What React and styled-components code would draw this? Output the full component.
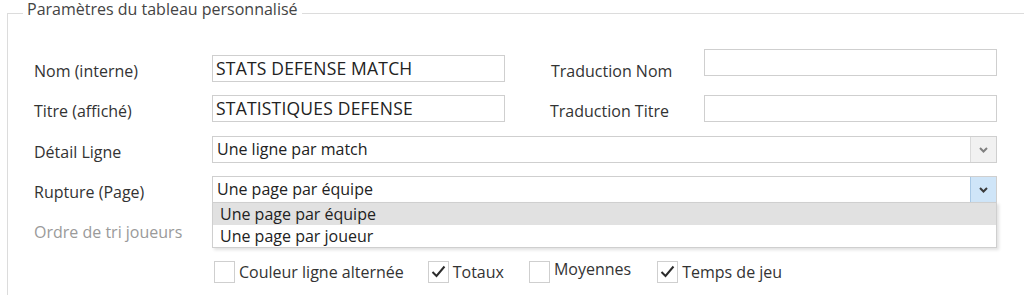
import { createGlobalStyle, styled } from "styled-components";

const GlobalStyle = createGlobalStyle`
  html, body {
    margin: 0;
    padding: 0;
    background: #ffffff;
    overflow: hidden;
  }
  body {
    font-family: "Open Sans", "Noto Sans", Arial, sans-serif;
    font-size: 16px;
    color: #333333;
  }
`;

const Page = styled.div`
  width: 1024px;
  height: 295px;
  overflow: hidden;
`;

const Fieldset = styled.fieldset`
  margin: 0 0 0 7px;
  width: 1060px;
  padding: 29px 0 20px 26px;
  border: 1px solid #dcdcdc;
  min-inline-size: 0;
`;

const Legend = styled.legend`
  margin-left: -11px;
  padding: 0 4px 8px 4px;
  line-height: 18px;
  font-size: 16px;
  color: #444444;
`;

const Row = styled.div`
  display: flex;
  align-items: center;
  height: 27px;
  margin-bottom: ${(p) => p.$gap ?? 13}px;
`;

const Label = styled.div`
  width: ${(p) => p.$width ?? 178}px;
  margin-left: ${(p) => p.$indent ?? 0}px;
  padding-top: 5px;
  color: ${(p) => (p.$disabled ? "#9a9a9a" : "#333333")};
  white-space: nowrap;
`;

const TextBox = styled.div`
  box-sizing: border-box;
  width: 293px;
  height: 27px;
  margin-bottom: ${(p) => p.$lift ?? 0}px;
  border: 1px solid #cfcfcf;
  padding: 0 3px;
  font-size: 17.5px;
  line-height: 25px;
  letter-spacing: 0.2px;
  color: #222222;
  white-space: nowrap;
  overflow: hidden;
`;

const SelectWrap = styled.div`
  position: relative;
  width: 785px;
  height: 27px;
`;

const SelectBox = styled.div`
  box-sizing: border-box;
  display: flex;
  width: 100%;
  height: 100%;
  border: 1px solid #cfcfcf;
  background: #ffffff;
`;

const SelectValue = styled.div`
  flex: 1;
  padding: 0 4px;
  line-height: 25px;
  color: #222222;
  white-space: nowrap;
`;

const SelectButton = styled.div`
  width: 25px;
  display: flex;
  align-items: center;
  justify-content: center;
  border-left: 1px solid ${(p) => (p.$open ? "#a9c9e6" : "#dadada")};
  background: ${(p) => (p.$open ? "#cfe5f8" : "#f1f1f1")};
  color: ${(p) => (p.$open ? "#3b3b3b" : "#808080")};
`;

const DropList = styled.div`
  position: absolute;
  top: 26px;
  left: 0;
  right: 0;
  z-index: 2;
  box-sizing: border-box;
  border: 1px solid #cfcfcf;
  background: #ffffff;
  box-shadow: 2px 2px 3px rgba(0, 0, 0, 0.12);
`;

const DropItem = styled.div`
  height: 22px;
  line-height: 22px;
  padding: 0 7px;
  color: #222222;
  background: ${(p) => (p.$active ? "#e1e1e1" : "#ffffff")};
`;

const Checks = styled.div`
  display: flex;
  align-items: center;
  margin-left: 180px;
  height: 23px;
`;

const CheckItem = styled.label`
  display: flex;
  align-items: center;
  gap: 4px;
  margin-right: ${(p) => p.$space}px;
  color: #333333;
  white-space: nowrap;
`;

const CheckText = styled.span`
  padding-bottom: ${(p) => (p.$raised ? 6 : 0)}px;
`;

const Box = styled.span`
  box-sizing: border-box;
  width: 21px;
  height: 22px;
  border: 1px solid #cfcfcf;
  background: #ffffff;
  display: flex;
  align-items: center;
  justify-content: center;
`;

function Chevron() {
  return (
    <svg width="9" height="6" viewBox="0 0 9 6">
      <path d="M1 1 L4.5 4.5 L8 1" fill="none" stroke="currentColor" strokeWidth="2" />
    </svg>
  );
}

function Tick() {
  return (
    <svg width="15" height="13" viewBox="0 0 15 13">
      <path d="M1.5 7 L5.5 11 L13.5 1.5" fill="none" stroke="#2b2b2b" strokeWidth="2" />
    </svg>
  );
}

function Check({ label, checked, space, raised }) {
  return (
    <CheckItem $space={space}>
      <Box>{checked && <Tick />}</Box>
      <CheckText $raised={raised}>{label}</CheckText>
    </CheckItem>
  );
}

export default function App() {
  return (
    <Page>
      <GlobalStyle />
      <Fieldset>
        <Legend>Paramètres du tableau personnalisé</Legend>

        <Row>
          <Label>Nom (interne)</Label>
          <TextBox>STATS DEFENSE MATCH</TextBox>
          <Label $indent={46} $width={153}>
            Traduction Nom
          </Label>
          <TextBox $lift={12} />
        </Row>

        <Row $gap={14}>
          <Label>Titre (affiché)</Label>
          <TextBox>STATISTIQUES DEFENSE</TextBox>
          <Label $indent={45} $width={154}>
            Traduction Titre
          </Label>
          <TextBox />
        </Row>

        <Row>
          <Label>Détail Ligne</Label>
          <SelectWrap>
            <SelectBox>
              <SelectValue>Une ligne par match</SelectValue>
              <SelectButton>
                <Chevron />
              </SelectButton>
            </SelectBox>
          </SelectWrap>
        </Row>

        <Row $gap={13}>
          <Label>Rupture (Page)</Label>
          <SelectWrap>
            <SelectBox>
              <SelectValue>Une page par équipe</SelectValue>
              <SelectButton $open>
                <Chevron />
              </SelectButton>
            </SelectBox>
            <DropList>
              <DropItem $active>Une page par équipe</DropItem>
              <DropItem>Une page par joueur</DropItem>
            </DropList>
          </SelectWrap>
        </Row>

        <Row $gap={17}>
          <Label $disabled>Ordre de tri joueurs</Label>
        </Row>

        <Checks>
          <Check label="Couleur ligne alternée" space={24} />
          <Check label="Totaux" checked space={25} />
          <Check label="Moyennes" space={26} raised />
          <Check label="Temps de jeu" checked space={0} />
        </Checks>
      </Fieldset>
    </Page>
  );
}
